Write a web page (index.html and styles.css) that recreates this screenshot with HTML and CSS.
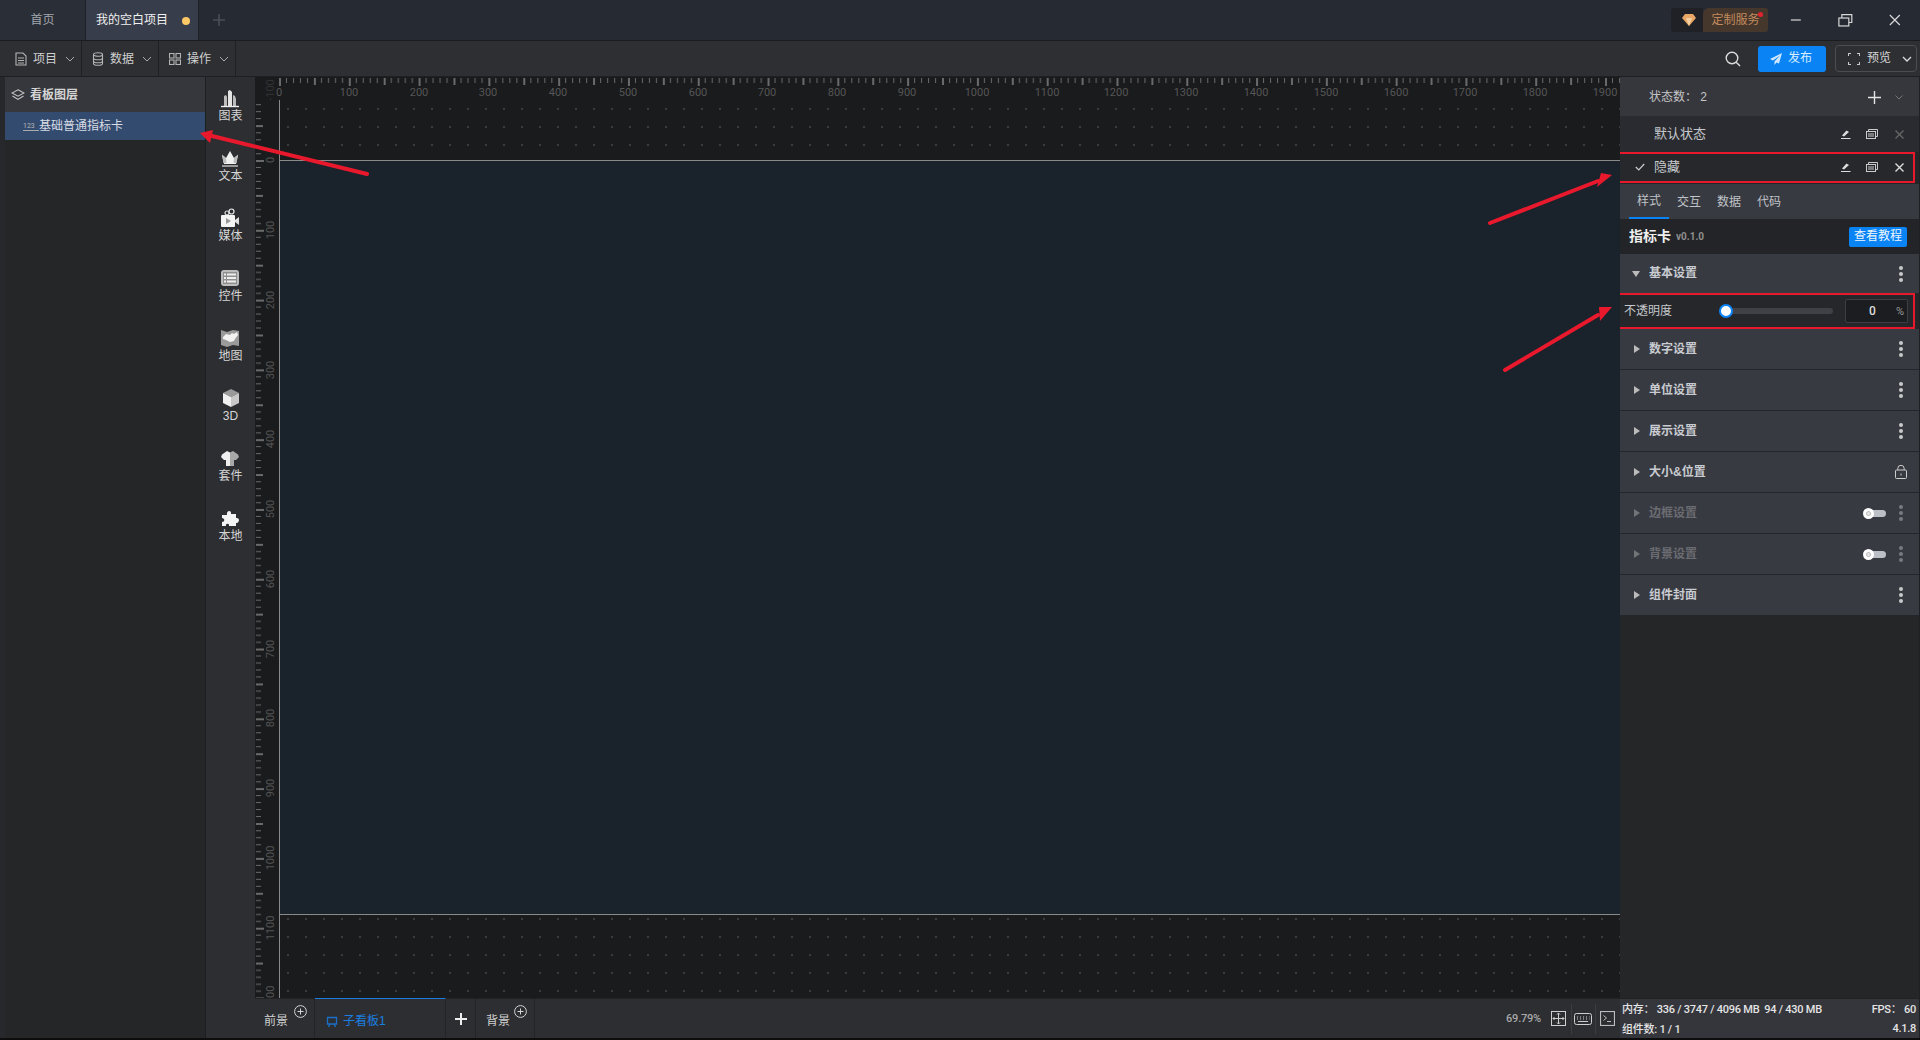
FILE: index.html
```html
<!DOCTYPE html>
<html lang="zh">
<head>
<meta charset="utf-8">
<title>我的空白项目</title>
<link rel="stylesheet" href="styles.css">
</head>
<body>
<div class="app">
  <header class="titlebar">
    <div class="tab">首页</div>
    <div class="tab tab-active"><span>我的空白项目</span><i class="dirty"></i></div>
    <svg class="tab-add" width="14" height="14" viewBox="0 0 14 14"><path d="M7 1v12M1 7h12" stroke="#4a4d56" stroke-width="1.6"/></svg>
    <div class="spacer"></div>
    <div class="service">
      <div class="gem"><svg width="14" height="12" viewBox="0 0 14 12"><path d="M3 0h8l3 4-7 8-7-8z" fill="#e9a766"/><path d="M4 4h6L7 12z" fill="#f6cfa0"/></svg></div>
      <div class="service-label">定制服务<i class="red-dot"></i></div>
    </div>
    <div class="winbtns">
      <svg width="50" height="41" viewBox="0 0 50 41"><path d="M20 20h10" stroke="#d8d8d8" stroke-width="1.2"/></svg>
      <svg width="50" height="41" viewBox="0 0 50 41" fill="none" stroke="#d8d8d8" stroke-width="1.2"><rect x="18" y="18" width="10" height="8"/><path d="M21 18v-3.500h10v8h-3"/></svg>
      <svg width="50" height="41" viewBox="0 0 50 41"><path d="M20 15l10 10M30 15l-10 10" stroke="#d8d8d8" stroke-width="1.2"/></svg>
    </div>
  </header>

  <nav class="toolbar">
    <div class="menu menu-1">
      <svg width="12" height="14" viewBox="0 0 12 14" fill="none" stroke="#b5b5b5" stroke-width="1.1"><path d="M1 1h7l3 3v9H1z"/><path d="M3 6h6M3 8.500h6M3 11h6"/></svg>
      <span>项目</span><svg class="chev" width="10" height="6" viewBox="0 0 10 6"><path d="M1 1l4 4 4-4" fill="none" stroke="#aaa"/></svg>
    </div>
    <div class="menu menu-2">
      <svg width="12" height="14" viewBox="0 0 12 14" fill="none" stroke="#b5b5b5" stroke-width="1.1"><ellipse cx="6" cy="2.500" rx="4.500" ry="1.800"/><path d="M1.500 2.500v9c0 1 2 1.800 4.500 1.800s4.500-.8 4.500-1.800v-9M1.500 6c0 1 2 1.800 4.500 1.800S10.500 7 10.500 6M1.500 9c0 1 2 1.800 4.500 1.800s4.500-.8 4.500-1.800"/></svg>
      <span>数据</span><svg class="chev" width="10" height="6" viewBox="0 0 10 6"><path d="M1 1l4 4 4-4" fill="none" stroke="#aaa"/></svg>
    </div>
    <div class="menu menu-3">
      <svg width="12" height="12" viewBox="0 0 12 12" fill="none" stroke="#b5b5b5" stroke-width="1.1"><rect x=".5" y=".5" width="4.500" height="4.500"/><rect x="7" y=".5" width="4.500" height="4.500"/><rect x=".5" y="7" width="4.500" height="4.500"/><rect x="7" y="7" width="4.500" height="4.500"/></svg>
      <span>操作</span><svg class="chev" width="10" height="6" viewBox="0 0 10 6"><path d="M1 1l4 4 4-4" fill="none" stroke="#aaa"/></svg>
    </div>
    <div class="spacer"></div>
    <svg class="search" width="16" height="16" viewBox="0 0 16 16" fill="none" stroke="#ddd" stroke-width="1.4"><circle cx="7" cy="7" r="5.800"/><path d="M11.200 11.200l3.800 3.800"/></svg>
    <div class="publish">
      <svg width="12" height="12" viewBox="0 0 12 12"><path d="M12 0L0 6l3 1.500L10 2.500 4.500 8.500V12l2-2.500 2.500 1z" fill="#cfe6ff"/></svg>
      <span>发布</span>
    </div>
    <div class="preview">
      <svg width="12" height="12" viewBox="0 0 12 12" fill="none" stroke="#c8c8c8" stroke-width="1.1"><path d="M.5 3V.5H3M9 .5h2.500V3M11.500 9v2.500H9M3 11.500H.5V9"/></svg>
      <span>预览</span>
      <svg class="chev-b" width="10" height="6" viewBox="0 0 10 6"><path d="M1 1l4 4 4-4" fill="none" stroke="#ddd" stroke-width="1.300"/></svg>
    </div>
  </nav>

  <main class="main">
    <div class="edge"></div>
    <aside class="layers">
      <div class="layers-head">
        <svg width="14" height="12" viewBox="0 0 14 12" fill="none" stroke="#c5c5c5" stroke-width="1.100"><path d="M7 .8L13 4 7 7.200 1 4z"/><path d="M1.500 7L7 10.400 12.500 7"/></svg>
        <span>看板图层</span>
      </div>
      <div class="layer-row">
        <span class="l123">123</span>
        <span>基础普通指标卡</span>
      </div>
    </aside>

    <div class="palette">
      <div class="pal-item"><svg width="20" height="20" viewBox="0 0 20 20"><path d="M8 18V3l2-1 2 2v14z" fill="#e4e4e4"/><path d="M4 18V8l2-1 1 2v9zM13 18V7l2 1 1 3v7z" fill="#bcbcbc"/><path d="M1 18.500h18" stroke="#eee" stroke-width="1.400"/></svg><span>图表</span></div>
      <div class="pal-item"><svg width="20" height="20" viewBox="0 0 20 20"><path d="M2 7l4 3 4-7 4 7 4-3-2 9H4z" fill="#f0f0f0"/><path d="M2 6.500l4 3.500 .5 5H3.500zM18 6.500l-4 3.500-.5 5h3z" fill="#bdbdbd"/><path d="M2 18h16" stroke="#bdbdbd" stroke-width="1.500"/></svg><span>文本</span></div>
      <div class="pal-item"><svg width="20" height="20" viewBox="0 0 20 20"><circle cx="7" cy="5" r="2" fill="none" stroke="#ddd" stroke-width="1.200"/><circle cx="11.500" cy="3.500" r="2.500" fill="none" stroke="#eee" stroke-width="1.200"/><rect x="1" y="7" width="14" height="12" rx="1" fill="#f4f4f4"/><path d="M15 12l4-3v8l-4-3z" fill="#e0e0e0"/><path d="M6 10l5 3-5 3z" fill="#999"/></svg><span>媒体</span></div>
      <div class="pal-item"><svg width="20" height="20" viewBox="0 0 20 20"><rect x="1" y="2" width="18" height="16" rx="3" fill="#bdbdbd"/><rect x="3" y="4" width="14" height="12" fill="#8f8f8f"/><path d="M4 6.500h2M7 6.500h9M4 10h2M7 10h9M4 13.500h2M7 13.500h9" stroke="#eee" stroke-width="1.800"/></svg><span>控件</span></div>
      <div class="pal-item"><svg width="20" height="20" viewBox="0 0 20 20"><path d="M1 2l6 2 6-2 6 1v15l-6-1-6 2-6-2z" fill="#9a9a9a"/><path d="M3 9l3-3 4 1 2-2 2 1 3-2 1 3-3 4-1 2-4 1-4-2-3-1z" fill="#f2f2f2"/></svg><span>地图</span></div>
      <div class="pal-item"><svg width="20" height="20" viewBox="0 0 20 20"><path d="M10 1l8 4-8 4-8-4z" fill="#9a9a9a"/><path d="M2 5l8 4v10l-8-4z" fill="#f0f0f0"/><path d="M18 5l-8 4v10l8-4z" fill="#c8c8c8"/></svg><span>3D</span></div>
      <div class="pal-item"><svg width="20" height="20" viewBox="0 0 20 20"><path d="M7 3L2 6.500 1 9l3 3h2v6h4V4.500z" fill="#efefef"/><path d="M13 3l5 3.500L19 9l-3 3h-2v6h-4V4.500z" fill="#a8a8a8"/></svg><span>套件</span></div>
      <div class="pal-item"><svg width="20" height="20" viewBox="0 0 20 20"><path d="M2 7h5C6 2 12 2 11 6h5v4c4-1 4 5 0 5v3H9c1-3-4-3-3 0H2v-4c3 0 3-4 0-4z" fill="#f4f4f4"/></svg><span>本地</span></div>
    </div>

    <section class="center">
      <div class="canvas">
        <div class="stage"></div>
        <div class="vline"></div>
        <svg class="ruler-top" width="1365" height="23" viewBox="0 0 1365 23">
          <defs>
            <pattern id="tickx" x="24" y="0" width="69.79" height="23" patternUnits="userSpaceOnUse">
              <path d="M0 1h2v8H0zM34.900 1h2v7h-2z" fill="#6a6a6a"/>
              <path d="M7 1h1v5H7zM14 1h1v5h-1zM21 1h1v5h-1zM28 1h1v5h-1zM42 1h1v5h-1zM49 1h1v5h-1zM56 1h1v5h-1zM63 1h1v5h-1z" fill="#6a6a6a"/>
            </pattern>
          </defs>
          <rect x="24" width="1341" height="23" fill="url(#tickx)" shape-rendering="crispEdges"/>
          <g class="rtext" text-anchor="middle">
            <text x="24" y="19">0</text><text x="94" y="19">100</text><text x="164" y="19">200</text><text x="233" y="19">300</text><text x="303" y="19">400</text><text x="373" y="19">500</text><text x="443" y="19">600</text><text x="512" y="19">700</text><text x="582" y="19">800</text><text x="652" y="19">900</text><text x="722" y="19">1000</text><text x="792" y="19">1100</text><text x="861" y="19">1200</text><text x="931" y="19">1300</text><text x="1001" y="19">1400</text><text x="1071" y="19">1500</text><text x="1141" y="19">1600</text><text x="1210" y="19">1700</text><text x="1280" y="19">1800</text><text x="1350" y="19">1900</text>
          </g>
        </svg>
        <svg class="ruler-left" width="24" height="921" viewBox="0 0 24 921">
          <defs>
            <pattern id="ticky" x="0" y="83" width="23" height="69.79" patternUnits="userSpaceOnUse">
              <path d="M1 0h8v2H1zM1 34.900h7v2H1z" fill="#6a6a6a"/>
              <path d="M1 7h5v1H1zM1 14h5v1H1zM1 21h5v1H1zM1 28h5v1H1zM1 42h5v1H1zM1 49h5v1H1zM1 56h5v1H1zM1 63h5v1H1z" fill="#6a6a6a"/>
            </pattern>
          </defs>
          <rect y="24" width="24" height="897" fill="url(#ticky)" shape-rendering="crispEdges"/>
          <g class="rtext" text-anchor="middle">
            <text class="rfaint" transform="translate(19 13) rotate(-90)">-100</text>
            <text transform="translate(19 83) rotate(-90)">0</text>
            <text transform="translate(19 153) rotate(-90)">100</text>
            <text transform="translate(19 223) rotate(-90)">200</text>
            <text transform="translate(19 293) rotate(-90)">300</text>
            <text transform="translate(19 362) rotate(-90)">400</text>
            <text transform="translate(19 432) rotate(-90)">500</text>
            <text transform="translate(19 502) rotate(-90)">600</text>
            <text transform="translate(19 572) rotate(-90)">700</text>
            <text transform="translate(19 641) rotate(-90)">800</text>
            <text transform="translate(19 711) rotate(-90)">900</text>
            <text transform="translate(19 781) rotate(-90)">1000</text>
            <text transform="translate(19 851) rotate(-90)">1100</text>
            <text transform="translate(19 921) rotate(-90)">1200</text>
          </g>
        </svg>
      </div>
      <div class="bottombar">
        <div class="bt bt-fg"><span>前景</span><svg class="plus-c" width="13" height="13" viewBox="0 0 13 13" fill="none" stroke="#d5d5d5"><circle cx="6.500" cy="6.500" r="5.900"/><path d="M6.500 3.500v6M3.500 6.500h6"/></svg></div>
        <div class="bt bt-board">
          <svg width="12" height="12" viewBox="0 0 12 12" fill="none" stroke="#1a6fc9" stroke-width="1.300"><path d="M1.500 1.500h9v6.500h-9zM4 8l-1.500 3M8 8l1.500 3"/></svg>
          <span>子看板1</span>
        </div>
        <div class="bt bt-add"><svg width="12" height="12" viewBox="0 0 12 12"><path d="M6 0v12M0 6h12" stroke="#eee" stroke-width="2"/></svg></div>
        <div class="bt bt-bg"><span>背景</span><svg class="plus-c" width="13" height="13" viewBox="0 0 13 13" fill="none" stroke="#d5d5d5"><circle cx="6.500" cy="6.500" r="5.900"/><path d="M6.500 3.500v6M3.500 6.500h6"/></svg></div>
        <div class="spacer"></div>
        <span class="zoomval">69.79%</span>
        <svg class="bi bi-fit" width="15" height="15" viewBox="0 0 15 15" fill="none" stroke="#cfcfcf"><rect x=".5" y=".5" width="14" height="14"/><path d="M7.500 2v11M2 7.500h11M6 3.500l1.500-1.500L9 3.500M6 11.500L7.500 13 9 11.500M3.500 6L2 7.500 3.500 9M11.500 6L13 7.500 11.500 9"/></svg>
        <i class="bsep"></i>
        <svg class="bi bi-key" width="18" height="12" viewBox="0 0 18 12" fill="none" stroke="#cfcfcf"><rect x=".5" y=".5" width="17" height="11" rx="2"/><path d="M3 4h1M6 4h1M9 4h1M12 4h1M15 4h.5M3 6h1M6 6h1M9 6h1M12 6h1M15 6h.5M4 8.500h10"/></svg>
        <i class="bsep"></i>
        <svg class="bi bi-term" width="15" height="15" viewBox="0 0 15 15" fill="none" stroke="#bbb"><rect x=".5" y=".5" width="14" height="14" stroke-width="1.200"/><path d="M3.500 4.500L6.500 7 3.500 9.500M7 10.500h4"/></svg>
      </div>
    </section>

    <aside class="props">
      <div class="st-count"><span>状态数： 2</span>
        <svg class="st-plus" width="13" height="13" viewBox="0 0 13 13"><path d="M6.500 0v13M0 6.500h13" stroke="#e4e4e4" stroke-width="1.400"/></svg>
        <svg class="st-chev" width="8" height="5" viewBox="0 0 8 5"><path d="M.5.5L4 4 7.500.5" fill="none" stroke="#777"/></svg>
      </div>
      <div class="st-row st-default">
        <span class="st-name">默认状态</span>
        <svg class="ic-edit" width="10" height="9" viewBox="0 0 10 9"><path d="M1 5.500L5.500.5 8 2 3 6.500z" fill="#ddd"/><path d="M0 8.500h9.500" stroke="#ddd"/></svg>
        <svg class="ic-copy" width="12" height="10" viewBox="0 0 12 10" fill="none" stroke="#ccc"><rect x=".5" y="2.500" width="9" height="7"/><path d="M2.500 2.500v-2h9v7h-2M2 5h6M2 7h6"/></svg>
        <svg class="ic-close" width="9" height="9" viewBox="0 0 9 9"><path d="M.5.500l8 8M8.500.500l-8 8" stroke="#666" stroke-width="1.400"/></svg>
      </div>
      <div class="st-row st-hidden hl">
        <svg class="ic-check" width="10" height="8" viewBox="0 0 10 8"><path d="M.8 4l3 3L9.200 1" fill="none" stroke="#ccc" stroke-width="1.200"/></svg>
        <span class="st-name">隐藏</span>
        <svg class="ic-edit" width="10" height="9" viewBox="0 0 10 9"><path d="M1 5.500L5.500.5 8 2 3 6.500z" fill="#ddd"/><path d="M0 8.500h9.500" stroke="#ddd"/></svg>
        <svg class="ic-copy" width="12" height="10" viewBox="0 0 12 10" fill="none" stroke="#ccc"><rect x=".5" y="2.500" width="9" height="7"/><path d="M2.500 2.500v-2h9v7h-2M2 5h6M2 7h6"/></svg>
        <svg class="ic-close" width="9" height="9" viewBox="0 0 9 9"><path d="M.5.500l8 8M8.500.500l-8 8" stroke="#ddd" stroke-width="1.400"/></svg>
      </div>
      <div class="ptabs">
        <span class="ptab ptab-on">样式</span><span class="ptab">交互</span><span class="ptab">数据</span><span class="ptab">代码</span>
      </div>
      <div class="comp-head">
        <b>指标卡</b><span class="ver">v0.1.0</span><span class="tut">查看教程</span>
      </div>
      <div class="sec sec-open">
        <svg class="tri" width="8" height="6" viewBox="0 0 8 6"><path d="M0 0h8L4 6z" fill="#bbb"/></svg>
        <span class="sec-name">基本设置</span>
        <i class="dots"></i>
      </div>
      <div class="opacity hl">
        <span class="op-label">不透明度</span>
        <div class="slider"><i class="knob"></i></div>
        <div class="op-input"><span>0</span><em>%</em></div>
      </div>
      <div class="sec"><svg class="tri" width="6" height="8" viewBox="0 0 6 8"><path d="M0 0l6 4-6 4z" fill="#bbb"/></svg><span class="sec-name">数字设置</span><i class="dots"></i></div>
      <div class="sec"><svg class="tri" width="6" height="8" viewBox="0 0 6 8"><path d="M0 0l6 4-6 4z" fill="#bbb"/></svg><span class="sec-name">单位设置</span><i class="dots"></i></div>
      <div class="sec"><svg class="tri" width="6" height="8" viewBox="0 0 6 8"><path d="M0 0l6 4-6 4z" fill="#bbb"/></svg><span class="sec-name">展示设置</span><i class="dots"></i></div>
      <div class="sec"><svg class="tri" width="6" height="8" viewBox="0 0 6 8"><path d="M0 0l6 4-6 4z" fill="#bbb"/></svg><span class="sec-name">大小&amp;位置</span>
        <svg class="lock" width="12" height="14" viewBox="0 0 12 14" fill="none" stroke="#ccc"><rect x=".5" y="5" width="11" height="8.500" rx="1"/><path d="M2.800 5V3.500a3.200 3.200 0 0 1 6.400 0V5M6 8.500v2"/></svg>
      </div>
      <div class="sec sec-off"><svg class="tri" width="6" height="8" viewBox="0 0 6 8"><path d="M0 0l6 4-6 4z" fill="#bbb"/></svg><span class="sec-name">边框设置</span><div class="toggle"><i></i></div><i class="dots"></i></div>
      <div class="sec sec-off"><svg class="tri" width="6" height="8" viewBox="0 0 6 8"><path d="M0 0l6 4-6 4z" fill="#bbb"/></svg><span class="sec-name">背景设置</span><div class="toggle"><i></i></div><i class="dots"></i></div>
      <div class="sec"><svg class="tri" width="6" height="8" viewBox="0 0 6 8"><path d="M0 0l6 4-6 4z" fill="#bbb"/></svg><span class="sec-name">组件封面</span><i class="dots"></i></div>
      <div class="spacer"></div>
      <div class="status">
        <div class="status-line"><span>内存： 336 / 3747 / 4096 MB &nbsp;94 / 430 MB</span><span>FPS： 60</span></div>
        <div class="status-line"><span>组件数: 1 / 1</span><span class="ver-no">4.1.8</span></div>
      </div>
    </aside>
  </main>
  <div class="footer-line"></div>

  <svg class="arrows" width="1920" height="1040" viewBox="0 0 1920 1040">
    <g stroke="#e8192c" stroke-width="4" stroke-linecap="round" fill="#e8192c">
      <path d="M367 174L212 136"/>
      <path d="M1490 223L1598 181"/>
      <path d="M1505 370L1598 315"/>
    </g>
    <g fill="#e8192c">
      <path d="M200 133L213 130 210 143z"/>
      <path d="M1612 175L1601 173 1597 187z"/>
      <path d="M1612 307L1599 307 1600 321z"/>
    </g>
  </svg>
</div>
</body>
</html>
```

FILE: styles.css
```css
* { box-sizing: border-box; }
html, body { margin: 0; height: 100%; background: #111; overflow: hidden; }
body { font: 12px/1.2 "Liberation Sans", "Noto Sans CJK SC", sans-serif; color: #d0d0d0; }
.app { position: relative; width: 1920px; height: 1040px; display: flex; flex-direction: column; }
.spacer { flex: 1; }

.titlebar { height: 41px; display: flex; align-items: stretch; background: #262a33; border-bottom: 1px solid #1b1c1f; }
.tab { width: 86px; padding-top: 1px; display: flex; align-items: center; justify-content: center; color: #a2a6ad; background: #2a2e37; border-right: 1px solid #1f2126; }
.tab-active { width: 113px; color: #f0f0f0; background: #383d4b; justify-content: flex-start; padding-left: 10px; gap: 14px; }
.dirty { width: 8px; height: 8px; border-radius: 50%; background: #ffc766; }
.tab-add { align-self: center; margin-left: 13px; }
.service { display: flex; align-self: center; height: 24px; margin-right: 1px; }
.gem { width: 32px; background: #1f2127; border-radius: 3px 0 0 3px; display: flex; align-items: center; justify-content: center; padding-left: 4px; }
.service-label { position: relative; width: 65px; background: #46372c; border-radius: 6px 3px 3px 0; color: #c08a5e; display: flex; align-items: center; justify-content: center; font-size: 12px; }
.red-dot { position: absolute; right: 5px; top: 4px; width: 5px; height: 5px; border-radius: 50%; background: #e0232f; }
.winbtns { display: flex; width: 151px; padding-left: 2px; }

.toolbar { height: 36px; display: flex; align-items: center; background: #2e2f33; border-bottom: 1px solid #1e1f22; }
.menu { height: 100%; padding-top: 1px; display: flex; align-items: center; border-right: 1px solid #1f2023; padding-left: 15px; gap: 6px; white-space: nowrap; }
.menu-1 { width: 82px; }
.menu-2 { width: 77px; padding-left: 10px; }
.menu-3 { width: 77px; padding-left: 10px; }
.menu .chev { margin-left: 2px; }
.search { margin-right: 17px; }
.publish { width: 68px; height: 26px; background: #0a84f5; border-radius: 3px; display: flex; align-items: center; padding-left: 12px; gap: 6px; color: #dbeeff; margin-right: 9px; }
.preview { width: 82px; height: 27px; border: 1px solid #4c4d52; border-radius: 4px; display: flex; align-items: center; padding-left: 12px; gap: 7px; margin-right: 3px; color: #d5d5d5; }
.chev-b { margin-left: 4px; }

.main { flex: 1; display: flex; min-height: 0; }
.edge { width: 5px; background: #27282b; }
.layers { width: 201px; background: #252628; border-right: 1px solid #1d1e20; }
.layers-head { height: 35px; padding: 1px 0 0 6px; background: #36373c; display: flex; align-items: center; gap: 5px; font-weight: bold; color: #d5d5d5; }
.layer-row { height: 28px; background: #344b70; display: flex; align-items: center; padding: 1px 0 0 18px; color: #d8dde5; }
.l123 { width: 16px; font: 7px/8px "Roboto", sans-serif; color: #b5b5b5; border-bottom: 1px solid #aaa; }

.palette { width: 49px; background: #2d2e32; padding-top: 11px; display: flex; flex-direction: column; align-items: center; }
.pal-item { height: 60px; display: flex; flex-direction: column; align-items: center; color: #d5d5d5; }
.pal-item span { line-height: 16px; }

.center { flex: 1; min-width: 0; display: flex; flex-direction: column; }
.canvas { position: relative; flex: 1; overflow: hidden; background-color: #1a1b1d; background-image: radial-gradient(circle at 1px 1px, #3a3b3d 1px, transparent 1.2px); background-size: 18px 18px; background-position: 32px 31px; }
.stage { position: absolute; left: 24px; top: 83px; right: 0; height: 755px; background: #1a222b; border-top: 1px solid #8a8a8a; border-bottom: 1px solid #8a8a8a; }
.vline { position: absolute; left: 24px; top: 23px; bottom: 0; width: 1px; background: #8a8a8a; }
.ruler-top { position: absolute; left: 0; top: 0; background: #1a1b1d; }
.ruler-left { position: absolute; left: 0; top: 0; }
.canvas::before { content: ""; position: absolute; left: 0; top: 0; bottom: 0; width: 24px; background: #1a1b1d; }
.rtext { font: 11px "Roboto", sans-serif; fill: #555; }
.rfaint { fill: #333; }

.bottombar { height: 40px; display: flex; align-items: center; background: #2d2e32; border-top: 1px solid #222; }
.bt { height: 100%; position: relative; display: flex; align-items: center; border-right: 1px solid #232427; }
.bt-fg { width: 60px; padding: 5px 0 0 9px; }
.bt-board { width: 131px; padding: 6px 0 0 11px; gap: 5px; color: #1a7fe0; border-top: 1px solid #1a7fe0; margin-top: -1px; height: calc(100% + 1px); }
.bt-add { width: 30px; justify-content: center; }
.bt-bg { width: 59px; padding: 5px 0 0 10px; }
.plus-c { position: absolute; right: 7px; top: 6px; }
.zoomval { font: 500 11px "Roboto", sans-serif; letter-spacing: -.2px; color: #a8a8a8; margin-right: 10px; }
.bsep { width: 1px; height: 30px; background: #3c3d42; }
.bi { flex: none; }
.bi-fit { margin-right: 5px; }
.bi-key { margin: 0 3px 0 2px; }
.bi-term { margin: 0 5px 0 4px; }

.props { width: 300px; background: #252628; display: flex; flex-direction: column; border-right: 1px solid #1f2023; }
.st-count { height: 39px; padding: 1px 0 0 29px; background: #36373d; display: flex; align-items: center; color: #c5c5c5; }
.st-plus { margin-left: auto; }
.st-chev { margin: 0 16px 0 14px; }
.st-row { display: flex; align-items: center; }
.st-default { height: 36px; background: #2a2b30; padding-left: 34px; }
.st-hidden { height: 31px; background: #27282c; padding: 0 0 1px 15px; }
.st-name { color: #c5c8cc; font-size: 13px; }
.st-hidden .st-name { margin-left: 9px; }
.st-row .ic-edit { margin-left: auto; }
.ic-copy { margin-left: 15px; }
.ic-close { margin: 0 15px 0 17px; }
.st-hidden .ic-close { margin-right: 9px; }
.hl { border: 2px solid #e8192c; border-left: 0; margin-right: 4px; }
.ptabs { height: 35px; margin-top: 1px; background: #383a41; display: flex; align-items: center; padding-left: 9px; }
.ptab { width: 40px; height: 100%; padding-top: 2px; display: flex; align-items: center; justify-content: center; color: #c0c3c8; }
.ptab-on { border-bottom: 2px solid #0a84f5; }
.comp-head { height: 35px; background: #232427; display: flex; align-items: center; padding: 0 12px 0 9px; }
.comp-head b { color: #eee; font-size: 14px; }
.ver { font: bold 10px "Roboto", sans-serif; color: #8f8f8f; margin-left: 5px; }
.tut { margin-left: auto; width: 58px; height: 20px; background: #0a84f5; border-radius: 2px; color: #eaf5ff; display: flex; align-items: center; justify-content: center; font-size: 12px; }
.sec { height: 41px; background: #383a41; border-bottom: 1px solid #25262a; display: flex; align-items: center; padding-left: 14px; position: relative; flex: none; }
.sec-open { height: 39px; border-bottom: 0; padding-left: 12px; }
.sec-open .sec-name { margin-left: 9px; }
.tri { flex: none; }
.sec-name { margin-left: 9px; font-weight: bold; color: #c8cbd0; margin-right: auto; }
.sec-off .sec-name { color: #6a6c72; }
.sec-off .tri { opacity: .45; }
.sec-off .dots { opacity: .45; }
.dots { position: relative; width: 4px; height: 4px; margin-right: 16px; border-radius: 50%; background: #c9c9c9; box-shadow: 0 -6px 0 #c9c9c9, 0 6px 0 #c9c9c9; }
.lock { margin-right: 12px; }
.toggle { position: relative; width: 22px; height: 7px; margin-right: 13px; border-radius: 4px; background: #bdbfc6; }
.toggle i { position: absolute; left: -1px; top: -2px; width: 11px; height: 11px; border-radius: 50%; background: #e8e8e8; border: 3px solid #fff; box-shadow: inset 0 0 0 1px #bbb; }
.opacity { height: 36px; display: flex; align-items: center; padding-left: 4px; background: #26272b; flex: none; }
.op-label { width: 96px; color: #c5c8cc; }
.slider { position: relative; width: 113px; height: 6px; border-radius: 3px; background: #404146; }
.knob { position: absolute; left: -1px; top: -4px; width: 14px; height: 14px; border-radius: 50%; background: #fff; border: 2px solid #0a84f5; }
.op-input { margin-left: 12px; width: 63px; height: 24px; background: #1c1d20; border: 1px solid #3d3e43; border-radius: 2px; display: flex; align-items: center; padding-left: 23px; }
.op-input span { font: 500 12px "Roboto", sans-serif; color: #ddd; }
.op-input em { font: normal 11px "Roboto", sans-serif; color: #999; margin-left: auto; margin-right: 3px; }
.status { height: 40px; background: #35363c; padding: 0 3px 0 2px; font: 500 11px "Roboto", "Noto Sans CJK SC", sans-serif; letter-spacing: -.25px; color: #e4e4e4; border-top: 1px solid #222; }
.status-line { display: flex; justify-content: space-between; height: 18px; align-items: center; }
.status-line + .status-line { height: 20px; padding-top: 2px; }

.footer-line { height: 2px; background: #0d0d0e; }
.arrows { position: absolute; left: 0; top: 0; pointer-events: none; }
```
